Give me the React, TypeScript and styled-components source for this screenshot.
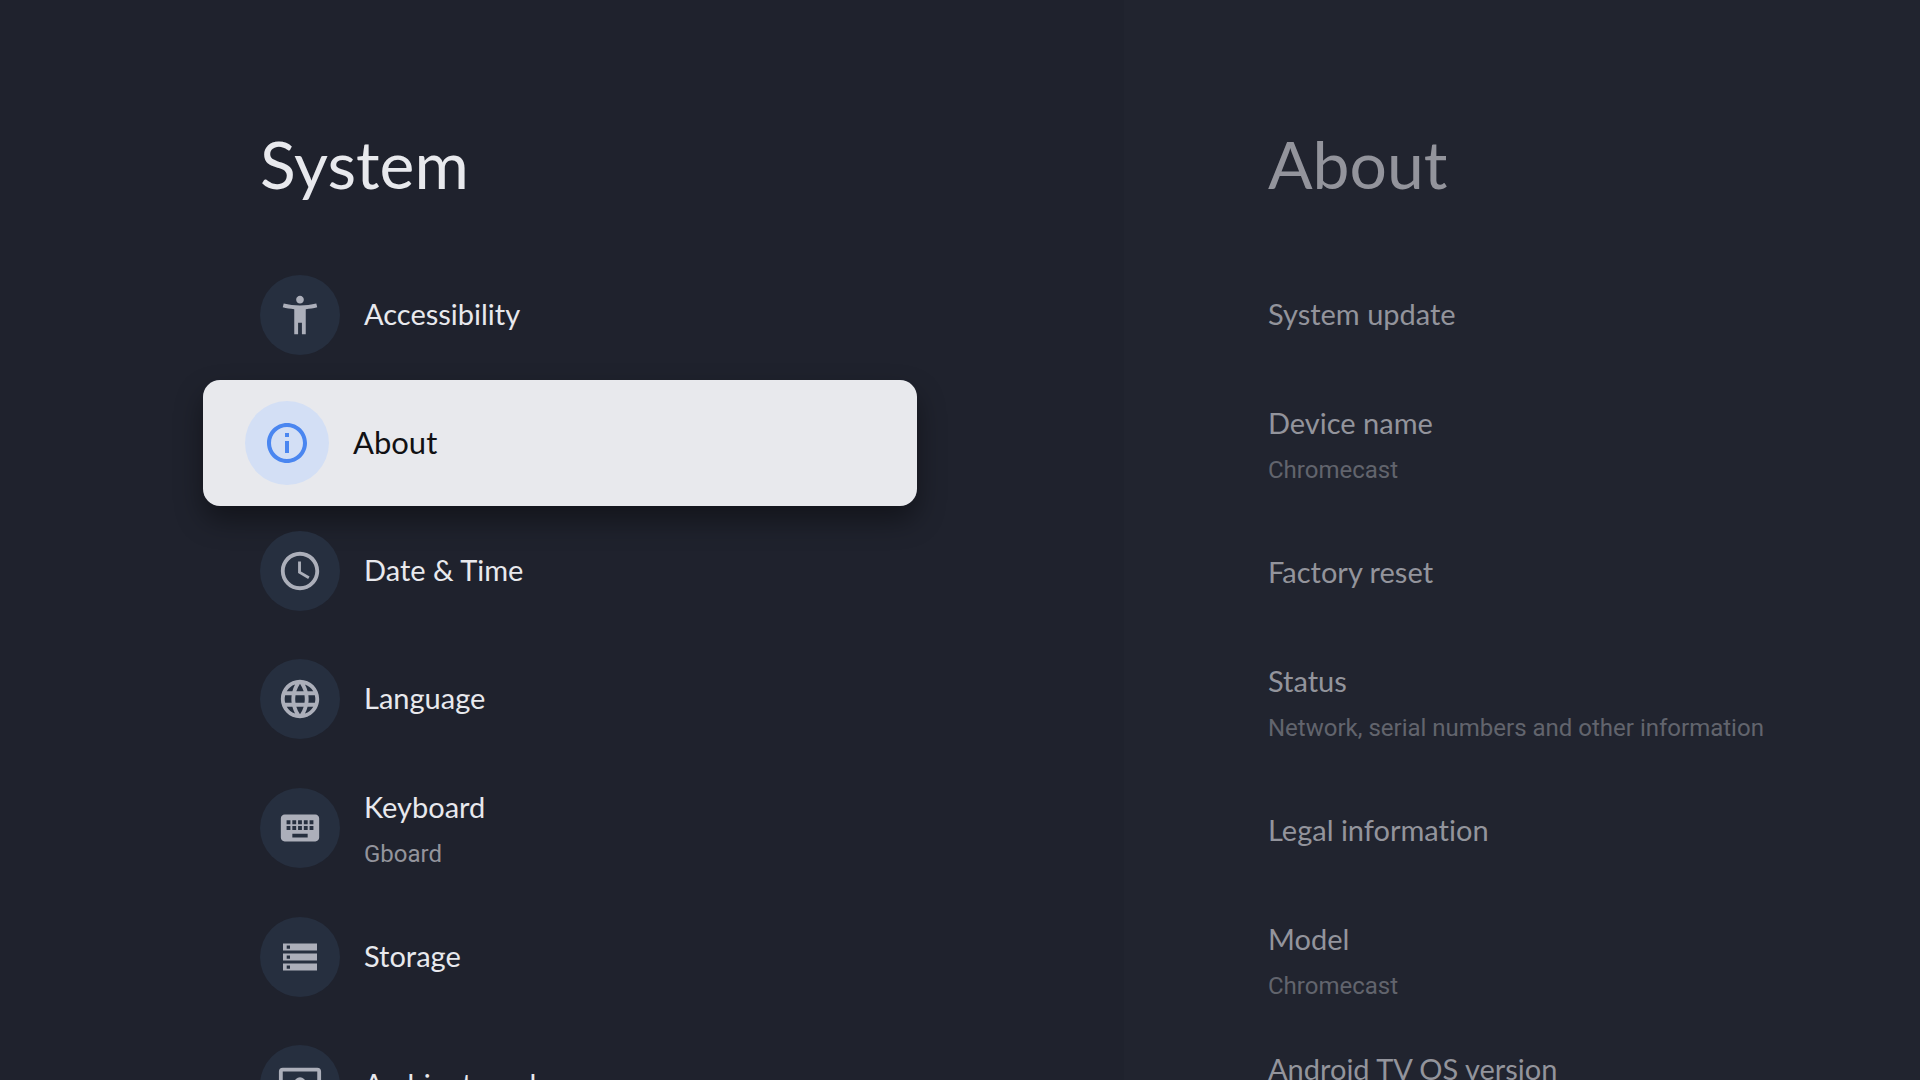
import React from "react";
import styled, { createGlobalStyle } from "styled-components";
import {
  MdAccessibilityNew,
  MdAccessTime,
  MdInfoOutline,
  MdKeyboard,
  MdLanguage,
} from "react-icons/md";

const displayFont = `Lato, "Open Sans", sans-serif`;
const bodyFont = `Roboto, "Liberation Sans", sans-serif`;

const GlobalStyle = createGlobalStyle`
  *, *::before, *::after { box-sizing: border-box; }
  body {
    margin: 0;
    background: #1f232d;
    font-family: ${bodyFont};
    font-variant-ligatures: none;
  }
`;

const Screen = styled.main`
  display: grid;
  grid-template-columns: minmax(0, 1124fr) minmax(0, 796fr);
  height: 100vh;
  overflow: hidden;
`;

const Panel = styled.section<{ $preview?: boolean }>`
  overflow: hidden;
  padding: 124px ${(p) => (p.$preview ? "64px 0 144px" : "224px 0 220px")};
  background: ${(p) => (p.$preview ? "#21242f" : "#1f222d")};
  --title: ${(p) => (p.$preview ? "#93949c" : "#e8e9ed")};
  --summary: ${(p) => (p.$preview ? "#62646d" : "#93949c")};
`;

const Heading = styled.h1<{ $indent?: boolean }>`
  margin: 0 0 51px;
  padding-left: ${(p) => (p.$indent ? "40px" : "0")};
  font-family: ${displayFont};
  font-weight: 400;
  font-size: 66px;
  line-height: 80px;
  color: var(--title);
`;

const List = styled.ul`
  display: flex;
  flex-direction: column;
  gap: 8px;
  margin: 0;
  padding: 0;
  list-style: none;
`;

const Item = styled.li<{ $focused?: boolean }>`
  display: flex;
  margin: ${(p) => (p.$focused ? "-3px -17px" : "0")};
`;

const Row = styled.button<{ $icon?: boolean; $focused?: boolean }>`
  flex: 1;
  display: flex;
  align-items: center;
  gap: 24px;
  min-height: ${(p) => (p.$focused ? "126px" : "120px")};
  padding: 0 ${(p) => (p.$focused ? "42px" : p.$icon ? "40px" : "0")};
  border: 0;
  border-radius: 17px;
  outline: 0;
  background: ${(p) => (p.$focused ? "#e8e9ed" : "transparent")};
  box-shadow: ${(p) => (p.$focused ? "0 14px 28px rgba(0, 0, 0, 0.4)" : "none")};
  color: ${(p) => (p.$focused ? "#111114" : "var(--title)")};
  font-family: ${displayFont};
  font-weight: 400;
  font-size: ${(p) => (p.$focused ? "31px" : "29px")};
  line-height: 36px;
  font-variant-ligatures: none;
  text-align: left;
`;

const TwoLineRow = styled(Row)`
  min-height: 122px;
`;

const Badge = styled.span<{ $focused?: boolean }>`
  flex: none;
  display: grid;
  place-items: center;
  width: ${(p) => (p.$focused ? "84px" : "80px")};
  aspect-ratio: 1;
  border-radius: 50%;
  background: ${(p) => (p.$focused ? "#d3dff5" : "#262f3f")};
  color: ${(p) => (p.$focused ? "#4a86f0" : "#acafba")};
  font-size: ${(p) => (p.$focused ? "48px" : "46px")};

  svg { display: block; }
`;

const Labels = styled.span<{ $twoLine?: boolean }>`
  display: flex;
  flex-direction: column;
  gap: 14px;
  padding: ${(p) => (p.$twoLine ? "2px 0 0" : "0 0 2px")};
`;

const Summary = styled.span`
  min-height: 30px;
  font-family: ${bodyFont};
  font-size: 24px;
  line-height: 30px;
  color: var(--summary);
`;

function StorageIcon() {
  return (
    <svg width="1em" height="1em" viewBox="0 0 46 46" fill="currentColor" fillRule="evenodd" aria-hidden="true">
      <path d="M6 9.4h34v7.2H6zM9.7 11.4v3.3H13v-3.3z" />
      <path d="M6 19.4h34v7.2H6zM9.7 21.4v3.3H13v-3.3z" />
      <path d="M6 29.4h34v7.2H6zM9.7 31.4v3.3H13v-3.3z" />
    </svg>
  );
}

function AmbientIcon() {
  return (
    <svg width="1em" height="1em" viewBox="0 0 24 24" fill="currentColor" aria-hidden="true">
      <path d="M21 3H3a2 2 0 0 0-2 2v12a2 2 0 0 0 2 2h5v2h8v-2h5a2 2 0 0 0 2-2V5a2 2 0 0 0-2-2zm0 14H3V5h18z" />
      <circle cx="12" cy="11" r="3" />
    </svg>
  );
}

type Entry = { label: string; summary?: string; icon?: React.ReactNode; focused?: boolean };

const systemEntries: Entry[] = [
  { label: "Accessibility", icon: <MdAccessibilityNew /> },
  { label: "About", icon: <MdInfoOutline />, focused: true },
  { label: "Date & Time", icon: <MdAccessTime /> },
  { label: "Language", icon: <MdLanguage /> },
  { label: "Keyboard", summary: "Gboard", icon: <MdKeyboard /> },
  { label: "Storage", icon: <StorageIcon /> },
  { label: "Ambient mode", icon: <AmbientIcon /> },
];

const aboutEntries: Entry[] = [
  { label: "System update" },
  { label: "Device name", summary: "Chromecast" },
  { label: "Factory reset" },
  { label: "Status", summary: "Network, serial numbers and other information" },
  { label: "Legal information" },
  { label: "Model", summary: "Chromecast" },
  { label: "Android TV OS version", summary: "" },
];

function Entries({ entries }: { entries: Entry[] }) {
  return (
    <List>
      {entries.map(({ label, summary, icon, focused }) => {
        const twoLine = summary !== undefined;
        const Shape = twoLine ? TwoLineRow : Row;
        return (
          <Item key={label} $focused={focused}>
            <Shape type="button" $icon={!!icon} $focused={focused}>
              {icon && <Badge $focused={focused}>{icon}</Badge>}
              <Labels $twoLine={twoLine}>
                <span>{label}</span>
                {twoLine && <Summary>{summary}</Summary>}
              </Labels>
            </Shape>
          </Item>
        );
      })}
    </List>
  );
}

export default function App() {
  return (
    <>
      <GlobalStyle />
      <Screen>
        <Panel>
          <Heading $indent>System</Heading>
          <Entries entries={systemEntries} />
        </Panel>
        <Panel $preview>
          <Heading as="h2">About</Heading>
          <Entries entries={aboutEntries} />
        </Panel>
      </Screen>
    </>
  );
}
